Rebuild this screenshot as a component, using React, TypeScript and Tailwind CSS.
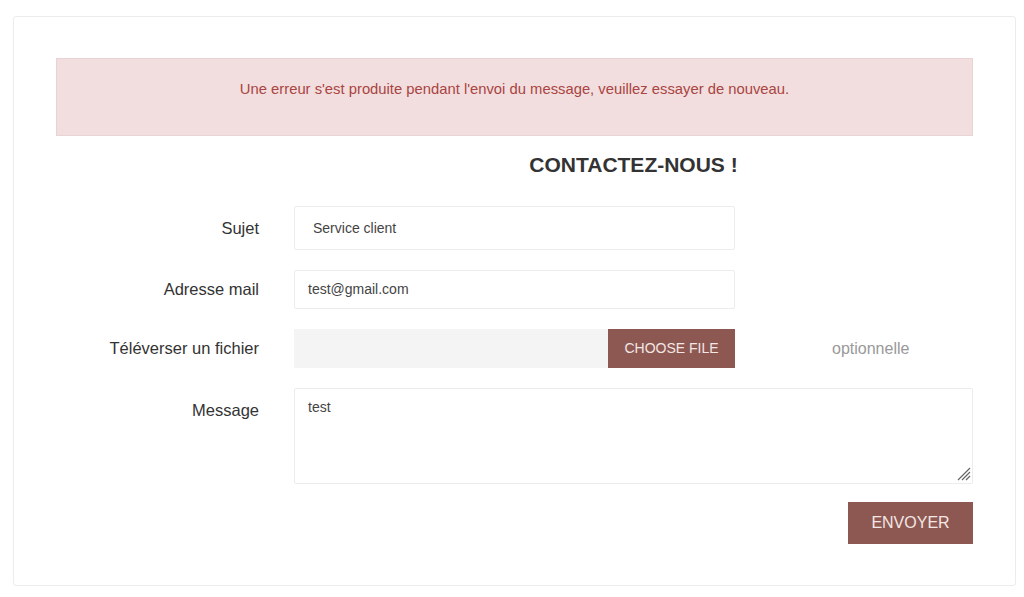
import React from "react";

const App: React.FC = () => {
    return (
        <div className="min-h-[597px] bg-white pt-[16px] pl-[13px] pr-[8px] font-['Liberation_Sans',Arial,sans-serif]">
            <div className="border border-[#ececec] rounded-[3px] px-[42px] pt-[41px] pb-[41px]">
                {/* Alerte */}
                <div className="bg-[#f2dede] border border-[#ead3d4] h-[78px] pt-[19px] text-center text-[14.8px] text-[#a94442]">
                    Une erreur s'est produite pendant l'envoi du message, veuillez essayer de nouveau.
                </div>

                <div className="grid grid-cols-[203px_1fr] gap-x-[35px] mt-[17px]">
                    <div />
                    <h2 className="text-center text-[21px] font-bold text-[#333] leading-[24px]">CONTACTEZ-NOUS !</h2>
                </div>

                <form className="flex flex-col gap-[20px] mt-[29px]">
                    <div className="grid grid-cols-[203px_441px_1fr] gap-x-[35px] items-center">
                        <label className="text-right text-[16.5px] text-[#333]">Sujet</label>
                        <div className="h-[44px] border border-[#ececec] rounded-[2px] flex items-center pl-[18px] text-[14px] text-[#444]">
                            Service client
                        </div>
                    </div>

                    <div className="grid grid-cols-[203px_441px_1fr] gap-x-[35px] items-center">
                        <label className="text-right text-[16.5px] text-[#333]">Adresse mail</label>
                        <div className="h-[39px] border border-[#ececec] rounded-[2px] flex items-center pl-[13px] text-[14px] text-[#444]">
                            test@gmail.com
                        </div>
                    </div>

                    <div className="grid grid-cols-[203px_441px_1fr] gap-x-[35px] items-center">
                        <label className="text-right text-[16.5px] text-[#333]">Téléverser un fichier</label>
                        <div className="h-[39px] flex bg-[#f4f4f4]">
                            <div className="flex-1" />
                            <button
                                type="button"
                                className="w-[127px] bg-[#8d5852] text-[#f3e6e4] text-[14px] uppercase"
                            >
                                Choose File
                            </button>
                        </div>
                        <span className="text-[16px] text-[#999] pl-[62px]">optionnelle</span>
                    </div>

                    <div className="grid grid-cols-[203px_1fr] gap-x-[35px] items-start">
                        <label className="text-right text-[16.5px] text-[#333] pt-[10px]">Message</label>
                        <div className="relative h-[96px] border border-[#ececec] rounded-[2px] pl-[13px] pt-[8px] text-[14px] text-[#444]">
                            test
                            <svg className="absolute right-[1px] bottom-[2px]" width="16" height="16" viewBox="0 0 16 16">
                                <path d="M15 3 L3 15 M15 7 L7 15 M15 11 L11 15" stroke="#666" strokeWidth="1.2" />
                            </svg>
                        </div>
                    </div>
                </form>

                <div className="flex justify-end mt-[18px]">
                    <button
                        type="button"
                        className="w-[125px] h-[42px] bg-[#8d5852] text-[#f3e6e4] text-[16px]"
                    >
                        ENVOYER
                    </button>
                </div>
            </div>
        </div>
    );
};

export default App;
